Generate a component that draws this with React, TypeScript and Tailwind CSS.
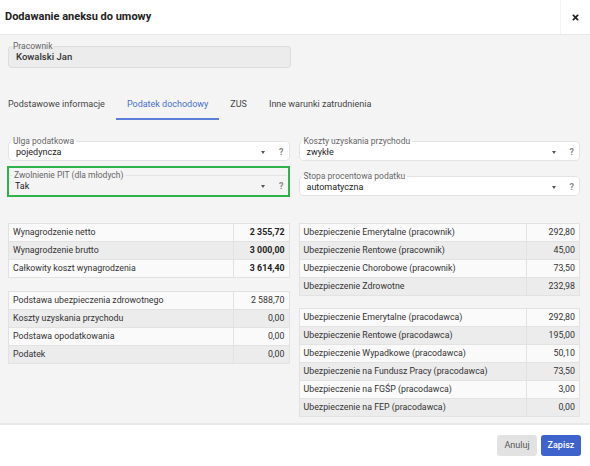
import { FaTimes } from 'react-icons/fa';

const leftTop = [
  { name: 'Wynagrodzenie netto', value: '2 355,72' },
  { name: 'Wynagrodzenie brutto', value: '3 000,00' },
  { name: 'Całkowity koszt wynagrodzenia', value: '3 614,40' },
];

const leftBottom = [
  { name: 'Podstawa ubezpieczenia zdrowotnego', value: '2 588,70' },
  { name: 'Koszty uzyskania przychodu', value: '0,00' },
  { name: 'Podstawa opodatkowania', value: '0,00' },
  { name: 'Podatek', value: '0,00' },
];

const rightTop = [
  { name: 'Ubezpieczenie Emerytalne (pracownik)', value: '292,80' },
  { name: 'Ubezpieczenie Rentowe (pracownik)', value: '45,00' },
  { name: 'Ubezpieczenie Chorobowe (pracownik)', value: '73,50' },
  { name: 'Ubezpieczenie Zdrowotne', value: '232,98' },
];

const rightBottom = [
  { name: 'Ubezpieczenie Emerytalne (pracodawca)', value: '292,80' },
  { name: 'Ubezpieczenie Rentowe (pracodawca)', value: '195,00' },
  { name: 'Ubezpieczenie Wypadkowe (pracodawca)', value: '50,10' },
  { name: 'Ubezpieczenie na Fundusz Pracy (pracodawca)', value: '73,50' },
  { name: 'Ubezpieczenie na FGŚP (pracodawca)', value: '3,00' },
  { name: 'Ubezpieczenie na FEP (pracodawca)', value: '0,00' },
];

const tabs = ['Podstawowe informacje', 'Podatek dochodowy', 'ZUS', 'Inne warunki zatrudnienia'];

interface Row {
  name: string;
  value: string;
}

function SelectField({ label, value }: { label: string; value: string }) {
  return (
    <fieldset className="h-[25px] rounded-[4px] border border-[#e3e3e3] bg-white pl-[7px] pr-[5px] flex items-center">
      <legend className="ml-[-5px] px-[2px] text-[8.5px] leading-[10px] text-[#666]">{label}</legend>
      <span className="flex-1 text-[9px] leading-none text-[#222] -mt-[2px]">{value}</span>
      <span className="mr-[14px] -mt-[2px] w-0 h-0 border-l-[2.5px] border-r-[2.5px] border-t-[3px] border-l-transparent border-r-transparent border-t-[#555]" />
      <span className="text-[9px] font-bold leading-none text-[#888] -mt-[2px]">?</span>
    </fieldset>
  );
}

function DataTable({ rows, bold, narrow }: { rows: Row[]; bold?: boolean; narrow?: boolean }) {
  return (
    <table className="w-full border-collapse border border-[#e2e2e2] text-[8.8px] text-[#333]">
      <tbody>
        {rows.map((row, i) => (
          <tr key={row.name} className={i % 2 === 0 ? 'h-[18px] bg-[#fafafa]' : 'h-[18px] bg-[#ececec]'}>
            <td className="border border-[#e2e2e2] pl-[4px] leading-none">{row.name}</td>
            <td
              className={`${narrow ? 'w-[53px]' : 'w-[56px]'} border border-[#e2e2e2] pr-[4px] text-right leading-none ${
                bold ? 'font-bold text-[#222]' : ''
              }`}
            >
              {row.value}
            </td>
          </tr>
        ))}
      </tbody>
    </table>
  );
}

export default function App() {
  return (
    <div className="w-[590px] h-[466px] bg-white flex flex-col font-['Roboto',sans-serif]">
      <div className="h-[35px] flex border-b border-[#e8e8e8] shrink-0">
        <div className="flex-1 pl-[5px] flex items-center text-[11px] font-bold text-[#222]">
          Dodawanie aneksu do umowy
        </div>
        <div className="w-[30px] border-l border-[#f2f2f2] flex items-center justify-center text-[#222]">
          <FaTimes size={9} />
        </div>
      </div>

      <div className="flex-1 bg-[#f4f4f4] pl-[8px] pr-[10px]">
        <fieldset className="mt-[6px] w-[283px] h-[27px] rounded-[4px] border border-[#dddddd] bg-[#ececec] pl-[7px] flex items-center">
          <legend className="ml-[-5px] px-[2px] text-[8.5px] leading-[10px] text-[#666]">Pracownik</legend>
          <span className="-mt-[3px] text-[9.5px] font-medium text-[#333]">Kowalski Jan</span>
        </fieldset>

        <div className="mt-[24px] flex text-[9px] text-[#444]">
          {tabs.map((tab, i) => (
            <div
              key={tab}
              className={`h-[28px] flex items-center ${i === 0 ? 'pr-[11px]' : 'px-[11px]'} ${
                i === 1 ? 'border-b-2 border-[#5b7fd6] text-[#4a6fcf]' : 'border-b-2 border-transparent'
              }`}
            >
              {tab}
            </div>
          ))}
        </div>

        <div className="mt-[16px] grid grid-cols-2 gap-x-[9px]">
          <SelectField label="Ulga podatkowa" value="pojedyncza" />
          <SelectField label="Koszty uzyskania przychodu" value="zwykłe" />
        </div>
        <div className="mt-[5px] grid grid-cols-2 gap-x-[9px] items-end">
          <div className="border-2 border-[#2db34a] -ml-[1px] pt-[2px] px-[1px]">
            <fieldset className="h-[25px] pl-[5px] pr-[3px] flex items-center border-t border-[#e3e3e3]">
              <legend className="ml-[-3px] px-[2px] text-[8.5px] leading-[10px] text-[#666]">
                Zwolnienie PIT (dla młodych)
              </legend>
              <span className="flex-1 text-[9px] leading-none text-[#222] -mt-[2px]">Tak</span>
              <span className="mr-[14px] -mt-[2px] w-0 h-0 border-l-[2.5px] border-r-[2.5px] border-t-[3px] border-l-transparent border-r-transparent border-t-[#555]" />
              <span className="text-[9px] font-bold leading-none text-[#888] -mt-[2px]">?</span>
            </fieldset>
          </div>
          <div className="mb-[1px]">
            <SelectField label="Stopa procentowa podatku" value="automatyczna" />
          </div>
        </div>

        <div className="mt-[26px] grid grid-cols-2 gap-x-[9px] items-start">
          <div>
            <DataTable rows={leftTop} bold />
            <div className="mt-[13px]">
              <DataTable rows={leftBottom} />
            </div>
          </div>
          <div>
            <DataTable rows={rightTop} narrow />
            <div className="mt-[12px]">
              <DataTable rows={rightBottom} narrow />
            </div>
          </div>
        </div>
      </div>

      <div className="h-[43px] shrink-0 border-t-2 border-[#e8e8e8] flex items-center justify-end gap-[4px] pr-[9px]">
        <button className="h-[21px] w-[40px] rounded-[3px] bg-[#e2e2e2] text-[9px] text-[#555]">Anuluj</button>
        <button className="h-[21px] w-[40px] rounded-[3px] bg-[#3e63cc] text-[9px] font-medium text-white">Zapisz</button>
      </div>
    </div>
  );
}
